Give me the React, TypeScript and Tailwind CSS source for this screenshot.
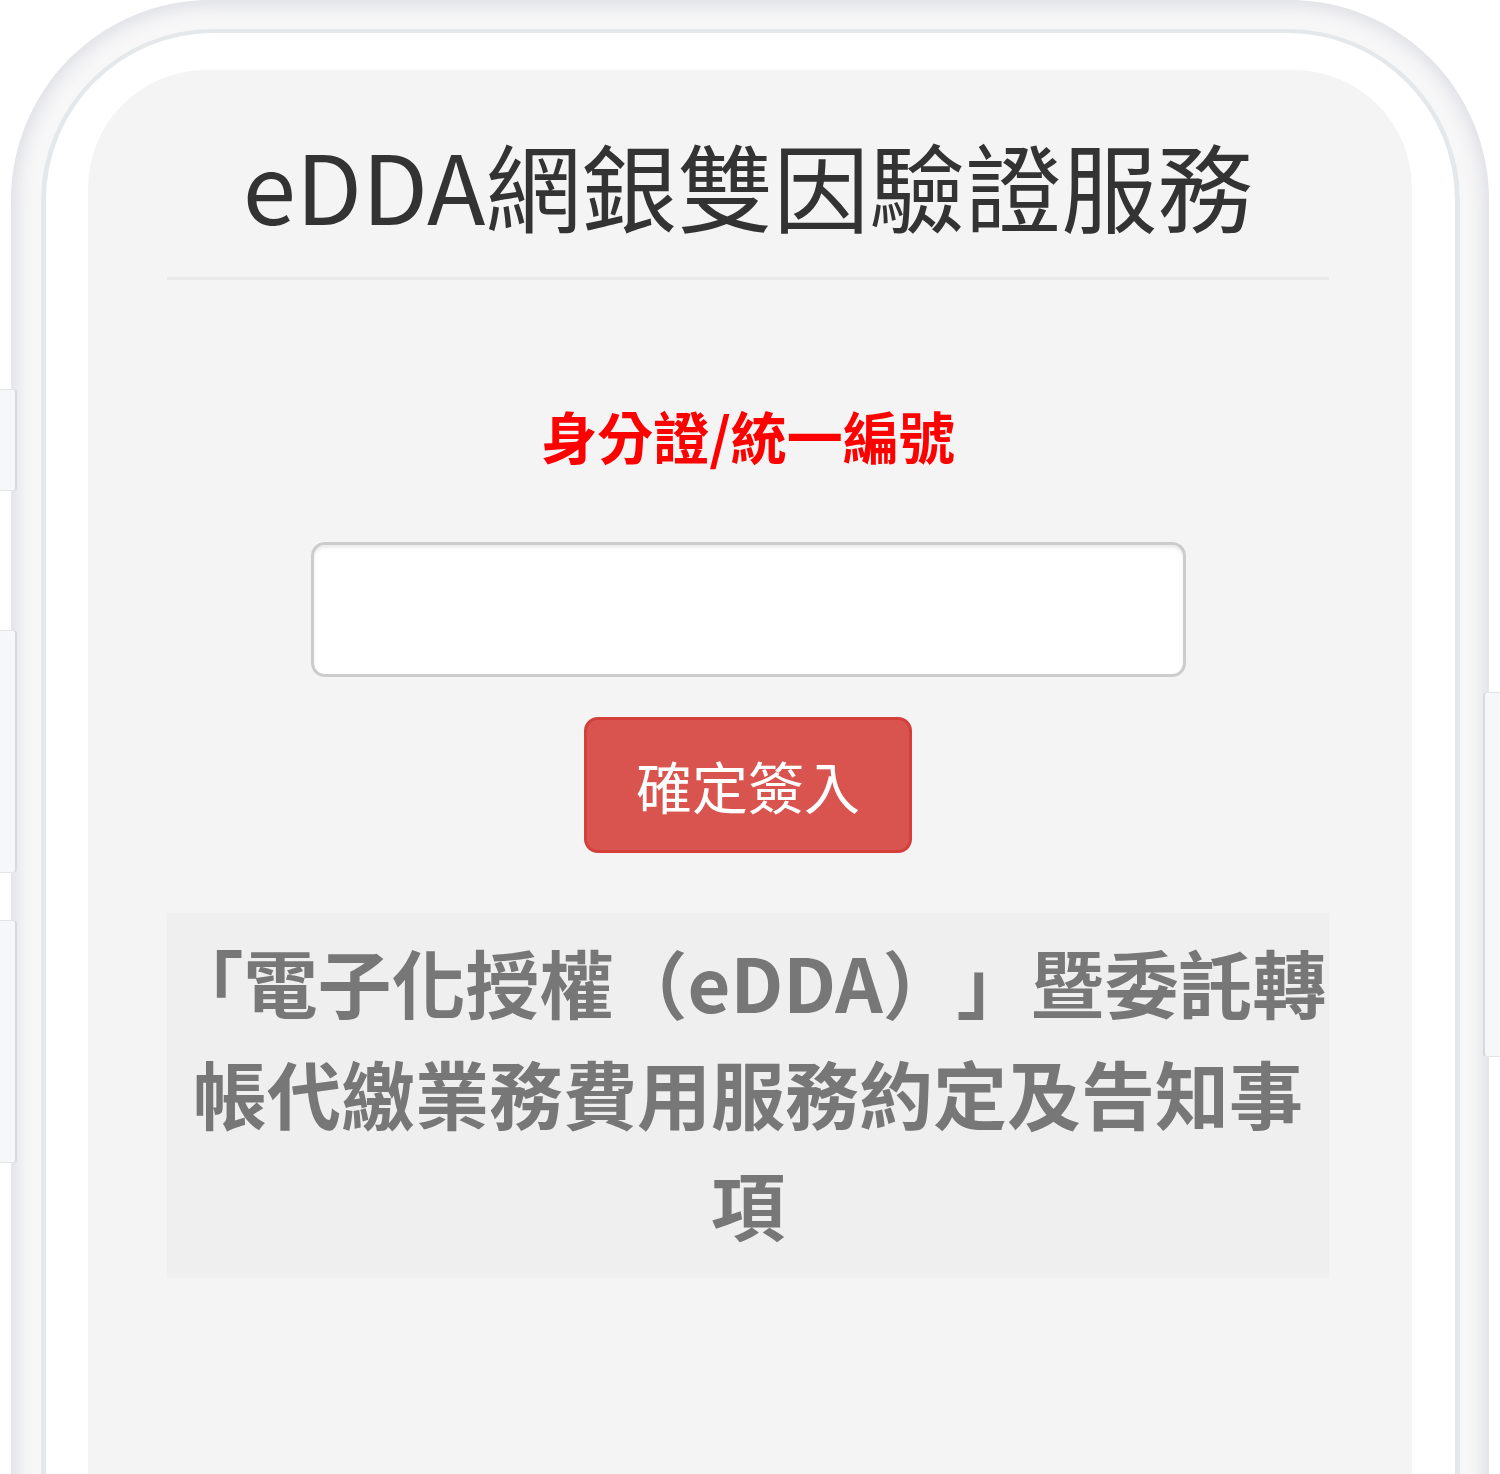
export default function App() {
  return (
    <div className="relative h-[1474px] w-[1500px] overflow-hidden bg-white font-['Noto_Sans_CJK_TC','Noto_Sans',sans-serif]">
      {/* side buttons */}
      <div className="absolute left-0 top-[389px] z-10 h-[102px] w-[17px] rounded-r-[4px] border border-l-0 border-[#e3e4e7] border-r-[2px] border-r-[#d8d9dc] bg-[#f6f7f9]" />
      <div className="absolute left-0 top-[630px] z-10 h-[243px] w-[17px] rounded-r-[4px] border border-l-0 border-[#e3e4e7] border-r-[2px] border-r-[#d8d9dc] bg-[#f6f7f9]" />
      <div className="absolute left-0 top-[920px] z-10 h-[243px] w-[17px] rounded-r-[4px] border border-l-0 border-[#e3e4e7] border-r-[2px] border-r-[#d8d9dc] bg-[#f6f7f9]" />
      <div className="absolute left-[1483px] top-[692px] z-10 h-[365px] w-[17px] rounded-l-[4px] border border-r-0 border-[#e3e4e7] border-l-[2px] border-l-[#d8d9dc] bg-[#f6f7f9]" />

      {/* phone frame */}
      <div className="ml-[11px] h-[1700px] w-[1478px] rounded-[200px] bg-[#f7f7f8] pl-[30px] pr-[29px] pt-[29px] shadow-[inset_0_0_18px_5px_#dcdde2]">
        <div className="h-full rounded-[172px] bg-[#e5e8ea] px-[5px] pt-[4px]">
          <div className="h-full rounded-[167px] bg-white pl-[42px] pr-[43px] pt-[37px]">
            <div className="flex h-full flex-col rounded-[118px] bg-[#f4f4f4] pl-[79px] pr-[83px] pt-[61px]">
              <h1 className="h-[106px] text-center text-[96px] font-normal leading-[106px] text-[#333333]">
                eDDA網銀雙因驗證服務
              </h1>
              <div className="mt-[40px] h-[3px] w-full bg-[#e9e9e9]" />
              <div className="mt-[115px] h-[80px] text-center text-[56px] font-bold leading-[80px] text-[#ff0000]">
                身分證/統一編號
              </div>
              <input
                type="text"
                className="mx-auto mt-[67px] block h-[135px] w-[875px] rounded-[14px] border-[3px] border-[#cccccc] bg-white shadow-[inset_0_3px_3px_rgba(0,0,0,0.075)] outline-none"
              />
              <button className="mx-auto mt-[40px] block h-[136px] w-[328px] rounded-[14px] border-[3px] border-[#d43f3a] bg-[#d9534f] text-[56px] font-normal leading-none text-white">
                確定簽入
              </button>
              <div className="mt-[60px] h-[365px] w-full bg-[#efefef] pt-[12px] text-center text-[74px] font-bold leading-[111px] text-[#777777] [text-spacing-trim:space-all]">
                「電子化授權（eDDA）」暨委託轉
                <br />
                帳代繳業務費用服務約定及告知事
                <br />
                項
              </div>
            </div>
          </div>
        </div>
      </div>
    </div>
  );
}
